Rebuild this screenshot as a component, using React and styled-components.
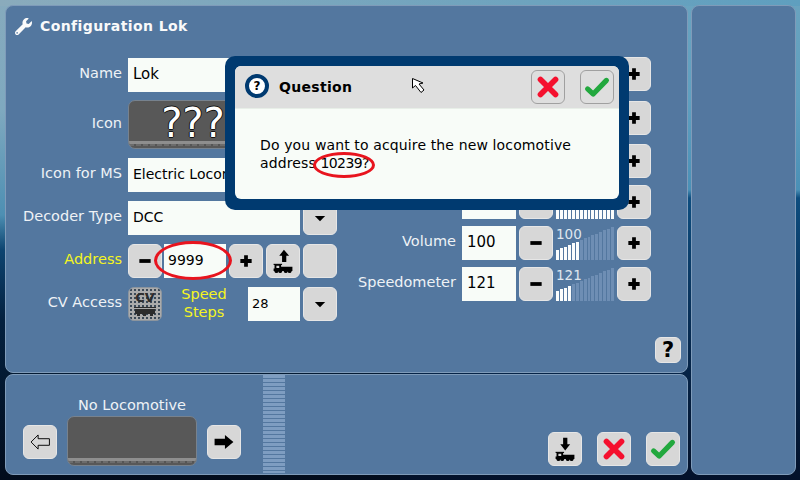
import React from "react";
import styled, { createGlobalStyle } from "styled-components";
import { FaWrench } from "react-icons/fa";

const GlobalStyle = createGlobalStyle`
  html, body {
    margin: 0;
    padding: 0;
    background: #04101f;
  }
  * {
    box-sizing: border-box;
  }
`;

const Screen = styled.div`
  position: relative;
  width: 800px;
  height: 480px;
  overflow: hidden;
  display: flex;
  gap: 3px;
  padding: 5px 4px 5px 5px;
  font-family: "DejaVu Sans", sans-serif;
  background:
    linear-gradient(90deg, #8aabbc, #5f9fbf) top / 100% 6px no-repeat,
    linear-gradient(#86aabd 0, #7fa9bf 110px, #4d8fb3 215px, #0d4470 250px, #04213f 320px, #020c1c 480px) left / 50% 100% no-repeat,
    linear-gradient(#6aa3bf 0, #5f9fbf 100px, #4a90b6 190px, #0d4d7f 198px, #06294f 340px, #03112a 480px) right / 50% 100% no-repeat;
`;

const LeftColumn = styled.div`
  width: 683px;
  display: flex;
  flex-direction: column;
  gap: 1px;
`;

const Panel = styled.div`
  position: relative;
  background: #53779f;
  border: 1px solid #7f9bb9;
  border-radius: 8px;
`;

const MainPanel = styled(Panel)`
  height: 368px;
  display: flex;
  flex-direction: column;
`;

const BottomPanel = styled(Panel)`
  height: 101px;
  display: flex;
  padding-left: 17px;
`;

const SidePanel = styled(Panel)`
  width: 105px;
`;

const Header = styled.div`
  height: 51px;
  display: flex;
  align-items: flex-start;
  gap: 8px;
  padding: 12px 0 0 9px;
  color: #fafafa;
  font-weight: bold;
  font-size: 14px;
  letter-spacing: 0.4px;
  line-height: 17px;
`;

const Columns = styled.div`
  display: flex;
`;

const LeftForm = styled.div`
  width: 331px;
  padding-top: 1px;
  display: flex;
  flex-direction: column;
  gap: 9px;
`;

const RightForm = styled.div`
  display: flex;
  flex-direction: column;
`;

const Row = styled.div`
  display: flex;
  align-items: center;
  height: ${(p) => p.$height || 34}px;
  margin-top: ${(p) => p.$top || 0}px;
`;

const Label = styled.div`
  flex: none;
  width: ${(p) => p.$width || 116}px;
  margin-right: 6px;
  padding-bottom: 4px;
  text-align: right;
  font-size: 14.5px;
  color: ${(p) => (p.$accent ? "#f5f51e" : "#eef2f6")};
`;

const Field = styled.div`
  flex: none;
  width: ${(p) => p.$width}px;
  height: 34px;
  margin-right: ${(p) => p.$after ?? 3}px;
  padding: 0 0 2px ${(p) => p.$pad || 5}px;
  display: flex;
  align-items: center;
  background: #f8fcf8;
  color: #000;
  font-size: ${(p) => p.$size || 14}px;
  white-space: nowrap;
  overflow: hidden;
`;

const Button = styled.div`
  flex: none;
  width: 34px;
  height: 34px;
  margin-right: ${(p) => p.$after || 0}px;
  display: flex;
  align-items: center;
  justify-content: center;
  background: #d7d7d7;
  border: 1px solid #e6e6e6;
  border-radius: 6px;
`;

const CvButton = styled(Button)`
  flex-direction: column;
  gap: 4px;
  background-color: #ababab;
  background-image: radial-gradient(#3c4a58 0.8px, transparent 1px);
  background-size: 4px 4px;
  border-color: #8c959e;
  color: #2c2c2c;
  font-size: 13px;
  font-weight: bold;
  line-height: 11px;
`;

const SpeedLabel = styled.div`
  flex: none;
  width: 86px;
  padding: 0 2px 2px 0;
  text-align: center;
  font-size: 14.5px;
  line-height: 18px;
  color: #f5f51e;
`;

const IconBox = styled.div`
  position: relative;
  flex: none;
  width: ${(p) => p.$width || 130}px;
  height: ${(p) => p.$height || 49}px;
  border: 1px solid #77828e;
  border-radius: 7px;
  background: #585858;
  overflow: hidden;
  display: flex;
  justify-content: center;
  color: #fff;
  font-size: 40px;
  line-height: 44px;
  text-shadow: -1px 0 #111, 1px 0 #111, 0 -1px #111, 0 1px #111;

  &::after {
    content: "";
    position: absolute;
    left: 0;
    right: 0;
    bottom: 2px;
    height: 5px;
    background:
      repeating-linear-gradient(90deg, #6c6c6c 0 5px, #555 5px 7px) bottom / 100% 2px no-repeat,
      #8e8e8e;
  }
`;

const Gauge = styled.div`
  position: relative;
  flex: none;
  width: 58px;
  height: 34px;
  margin: 0 3px;
  display: flex;
  align-items: flex-end;
  gap: 1px;
`;

const GaugeBar = styled.div`
  width: 3px;
  background: ${(p) => (p.$lit ? "#fbfdfd" : "#6e8eb4")};
`;

const GaugeValue = styled.div`
  position: absolute;
  left: 0;
  top: 1px;
  font-size: 13.5px;
  line-height: 14px;
  color: #dfe6ee;
`;

const HelpRow = styled.div`
  flex: 1;
  display: flex;
  justify-content: flex-end;
  align-items: flex-end;
  padding: 0 6px 9px 0;
`;

const HelpButton = styled(Button)`
  width: 26px;
  height: 26px;
  font-size: 21px;
  font-weight: bold;
  color: #000;
`;

const LocoPicker = styled.div`
  display: flex;
  align-items: flex-end;
  gap: 10px;
  padding-bottom: 8px;
  height: 100%;
`;

const PickerSide = styled.div`
  padding-bottom: 7px;
`;

const LocoSlot = styled.div`
  display: flex;
  flex-direction: column;
  align-items: center;
  gap: 3px;
  color: #eef2f6;
  font-size: 14.5px;
  line-height: 15px;
`;

const ScrollStrip = styled.div`
  flex: none;
  width: 22px;
  height: 98px;
  margin-left: 22px;
  background: repeating-linear-gradient(#7e9dc1 0 3px, #53779f 3px 4px);
`;

const Actions = styled.div`
  margin-left: auto;
  display: flex;
  align-items: flex-end;
  gap: 15px;
  padding: 0 7px 8px 0;
`;

const Dialog = styled.div`
  position: absolute;
  left: 225px;
  top: 56px;
  width: 404px;
  height: 154px;
  padding: 10px;
  background: #003a70;
  border-radius: 10px;
`;

const DialogInner = styled.div`
  height: 133px;
  border-radius: 6px;
  overflow: hidden;
  background: #f8fcf8;
`;

const DialogHeader = styled.div`
  height: 43px;
  display: flex;
  align-items: center;
  padding: 0 5px 0 10px;
  background: #dedede;
  border-bottom: 1px solid #e8efe8;
  color: #000;
  font-size: 14px;
  font-weight: bold;
  letter-spacing: 0.3px;
`;

const QuestionBadge = styled.div`
  width: 24px;
  height: 24px;
  margin: 0 10px 3px 0;
  display: flex;
  align-items: center;
  justify-content: center;
  border: 4px solid #003a70;
  border-radius: 50%;
  background: #fff;
  font-size: 12px;
  font-weight: bold;
  letter-spacing: 0;
`;

const DialogButtons = styled.div`
  margin-left: auto;
  display: flex;
  gap: 15px;
`;

const DialogButton = styled(Button)`
  background: #dedede;
  border-color: #a0a0a0;
`;

const DialogText = styled.div`
  padding: 27px 0 0 25px;
  color: #000;
  font-size: 14px;
  line-height: 18px;
  letter-spacing: 0.13px;
`;

const NewAddress = styled.span`
  letter-spacing: -0.6px;
`;

const RedRing = styled.div`
  position: absolute;
  left: ${(p) => p.$x}px;
  top: ${(p) => p.$y}px;
  width: ${(p) => p.$w}px;
  height: ${(p) => p.$h}px;
  border: 3px solid #e8141e;
  border-radius: 50%;
`;

const Pointer = styled.svg`
  position: absolute;
  left: 412px;
  top: 78px;
`;

const Icon = ({ size = 34, children }) => (
  <svg width={size} height={size} viewBox="0 0 34 34">
    {children}
  </svg>
);

const Minus = () => (
  <Icon>
    <rect x="11" y="15" width="12" height="4" />
  </Icon>
);

const Plus = () => (
  <Icon>
    <path d="M15 11h4v4h4v4h-4v4h-4v-4h-4v-4h4z" />
  </Icon>
);

const DownArrow = () => (
  <Icon>
    <path d="M11.5 15h11L17 20.5z" />
  </Icon>
);

const Cross = () => (
  <Icon>
    <path d="M9 9L25 25M25 9L9 25" stroke="#f5102e" strokeWidth="6" strokeLinecap="round" />
  </Icon>
);

const Check = () => (
  <Icon>
    <path d="M7 19L13 24.5L27 10" fill="none" stroke="#22a83e" strokeWidth="5.5" strokeLinecap="round" strokeLinejoin="round" />
  </Icon>
);

const Train = () => (
  <g>
    <rect x="7" y="20" width="9" height="1.2" />
    <path fillRule="evenodd" d="M8 21h7v2h12v4.5H7V25h1zM10 22v2.5h3V22z" />
    <circle cx="10" cy="27.8" r="2" />
    <circle cx="14" cy="27.8" r="2" />
    <circle cx="20" cy="27.8" r="2" />
    <circle cx="24" cy="27.8" r="2" />
  </g>
);

const LocoUp = () => (
  <Icon>
    <Train />
    <path d="M17 5L22.5 11.5H19.5V18H15V11.5H12z" transform="translate(1 0)" />
  </Icon>
);

const LocoDown = () => (
  <Icon>
    <Train />
    <path d="M15 5H19.5V12H22.5L17.2 18.5L12 12H15z" />
  </Icon>
);

const SmallTrain = () => (
  <svg width="22" height="9" viewBox="0 0 22 9" fill="#2c2c2c">
    <path d="M0 0h22v1H0zM1 2h20v5H1zM3 7h3v2H3zM9 7h3v2H9zM16 7h3v2h-3z" />
  </svg>
);

const Bars = ({ value, label }) => {
  const bars = [];
  for (let i = 0; i < 15; i++) {
    bars.push(<GaugeBar key={i} $lit={i < value} style={{ height: 10 + i * 1.65 }} />);
  }
  return (
    <Gauge>
      {bars}
      {label && <GaugeValue>{label}</GaugeValue>}
    </Gauge>
  );
};

const SliderRow = ({ name, value, lit, top }) => (
  <Row $top={top}>
    <Label $width={119}>{name}</Label>
    <Field $width={54} $size={15}>{value}</Field>
    <Button>
      <Minus />
    </Button>
    <Bars value={lit} label={value} />
    <Button>
      <Plus />
    </Button>
  </Row>
);

export default function App() {
  return (
    <Screen>
      <GlobalStyle />
      <LeftColumn>
        <MainPanel>
          <Header>
            <FaWrench size={17} />
            Configuration Lok
          </Header>
          <Columns>
            <LeftForm>
              <Row>
                <Label>Name</Label>
                <Field $width={172} $size={15}>Lok</Field>
              </Row>
              <Row $height={49} $top={-1}>
                <Label>Icon</Label>
                <IconBox>???</IconBox>
              </Row>
              <Row>
                <Label>Icon for MS</Label>
                <Field $width={172}>Electric Locomotive</Field>
                <Button>
                  <DownArrow />
                </Button>
              </Row>
              <Row>
                <Label>Decoder Type</Label>
                <Field $width={172}>DCC</Field>
                <Button>
                  <DownArrow />
                </Button>
              </Row>
              <Row>
                <Label $accent>Address</Label>
                <Button $after={2}>
                  <Minus />
                </Button>
                <Field $width={62} $pad={4}>9999</Field>
                <Button $after={3}>
                  <Plus />
                </Button>
                <Button $after={3}>
                  <LocoUp />
                </Button>
                <Button />
              </Row>
              <Row>
                <Label>CV Access</Label>
                <CvButton>
                  CV
                  <SmallTrain />
                </CvButton>
                <SpeedLabel>
                  Speed
                  <br />
                  Steps
                </SpeedLabel>
                <Field $width={52} $pad={4} $size={13}>28</Field>
                <Button>
                  <DownArrow />
                </Button>
              </Row>
            </LeftForm>
            <RightForm>
              <SliderRow />
              <SliderRow top={10} />
              <SliderRow top={9} />
              <SliderRow top={7} lit={15} />
              <SliderRow name="Volume" value="100" lit={6} top={7} />
              <SliderRow name="Speedometer" value="121" lit={4} top={7} />
            </RightForm>
          </Columns>
          <HelpRow>
            <HelpButton>?</HelpButton>
          </HelpRow>
        </MainPanel>
        <BottomPanel>
          <LocoPicker>
            <PickerSide>
              <Button>
                <Icon>
                  <path d="M7.5 17L15 9.5V13.5H27V20.5H15V24.5z" fill="none" stroke="#000" />
                </Icon>
              </Button>
            </PickerSide>
            <LocoSlot>
              No Locomotive
              <IconBox $height={50} />
            </LocoSlot>
            <PickerSide>
              <Button>
                <Icon>
                  <path d="M7 13.5H18V9.5L27 17L18 24.5V20.5H7z" />
                </Icon>
              </Button>
            </PickerSide>
          </LocoPicker>
          <ScrollStrip />
          <Actions>
            <Button>
              <LocoDown />
            </Button>
            <Button>
              <Cross />
            </Button>
            <Button>
              <Check />
            </Button>
          </Actions>
        </BottomPanel>
      </LeftColumn>
      <SidePanel />

      <RedRing $x={154} $y={241} $w={78} $h={39} />

      <Dialog>
        <DialogInner>
          <DialogHeader>
            <QuestionBadge>?</QuestionBadge>
            Question
            <DialogButtons>
              <DialogButton>
                <Cross />
              </DialogButton>
              <DialogButton>
                <Check />
              </DialogButton>
            </DialogButtons>
          </DialogHeader>
          <DialogText>
            Do you want to acquire the new locomotive
            <br />
            address <NewAddress>10239?</NewAddress>
          </DialogText>
        </DialogInner>
      </Dialog>

      <RedRing $x={313} $y={152} $w={62} $h={26} />

      <Pointer width="16" height="18" viewBox="0 0 16 18">
        <path d="M0.5 0.5L0.5 10L3.5 7.5L9 14.5L12 12L7 6L11 5z" fill="#fff" stroke="#000" />
      </Pointer>
    </Screen>
  );
}
